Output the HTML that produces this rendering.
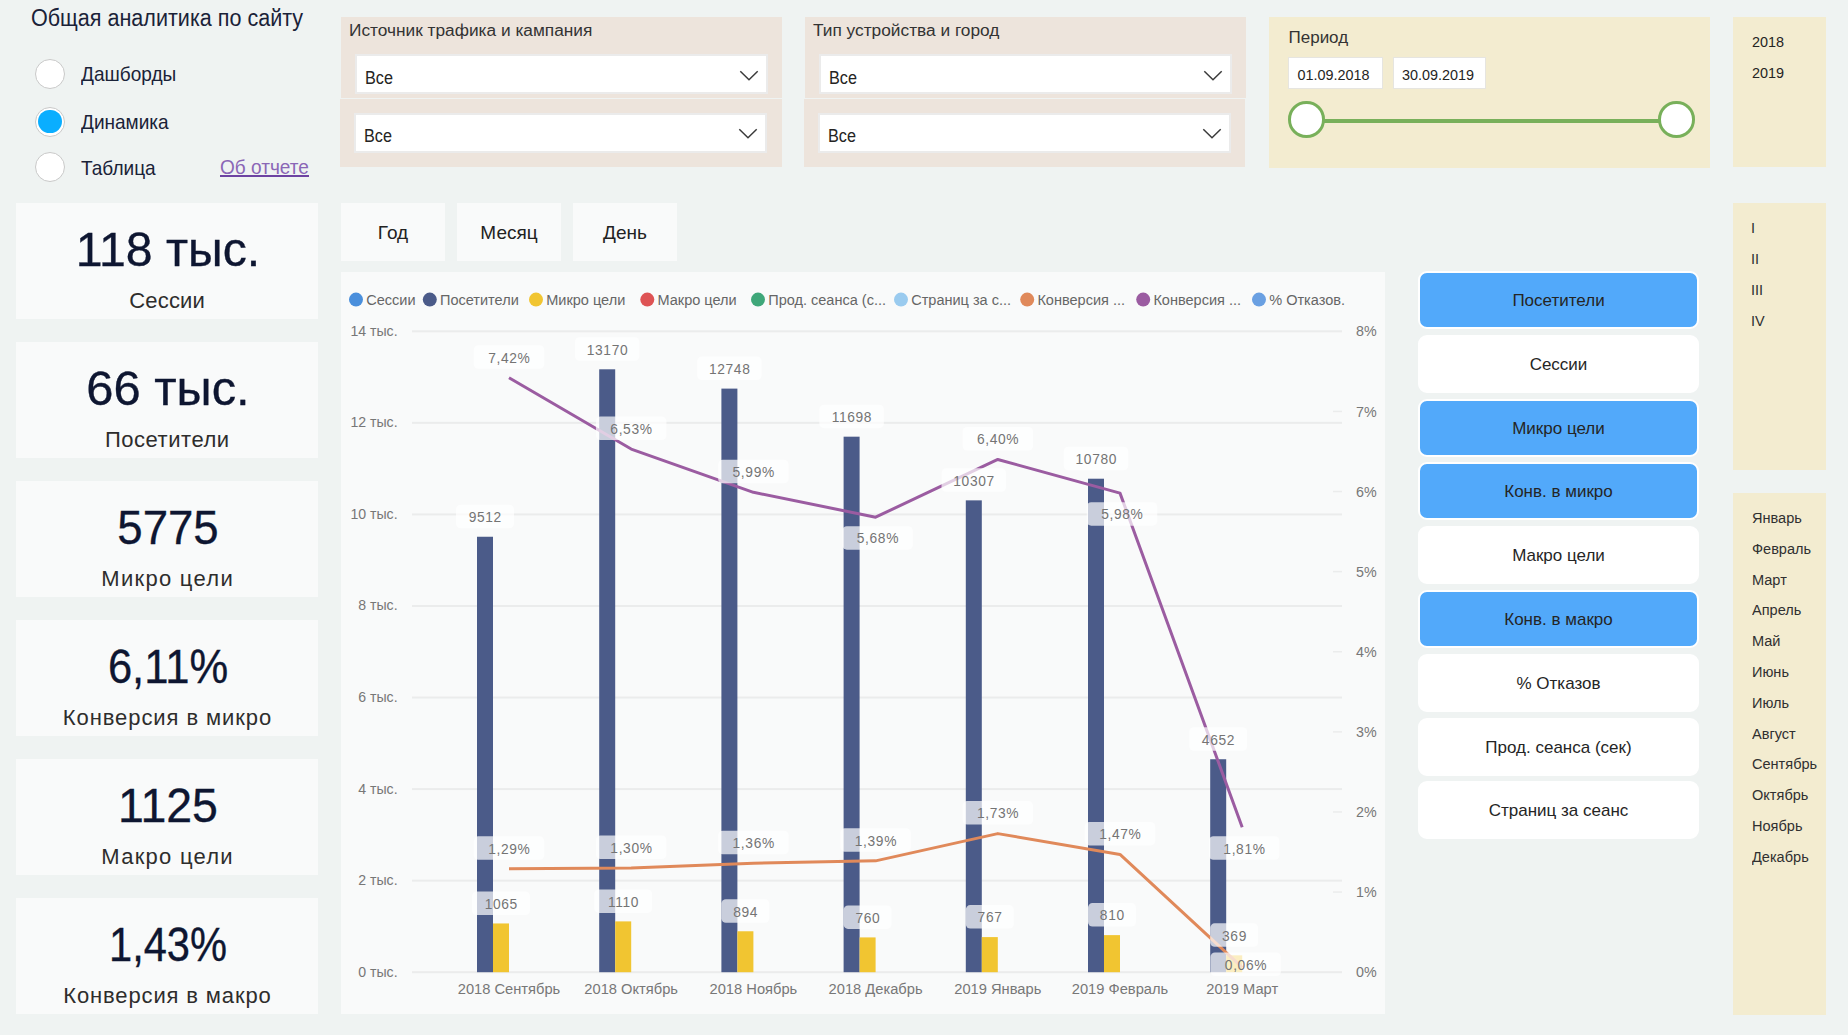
<!DOCTYPE html>
<html><head><meta charset="utf-8"><title>Общая аналитика по сайту</title>
<style>
html,body{margin:0;padding:0;}
body{width:1848px;height:1035px;overflow:hidden;position:relative;background:#eff3f2;font-family:"Liberation Sans", sans-serif;}
</style></head><body>
<div style="position:absolute;left:31.00px;top:6.73px;font-size:23px;line-height:23px;color:#1a2238;white-space:pre;transform:scaleX(0.937);transform-origin:0 50%;">Общая аналитика по сайту</div>
<div style="position:absolute;left:35px;top:59.3px;width:28px;height:28px;border-radius:50%;background:#fff;border:1px solid #c9c9c9;"></div>
<div style="position:absolute;left:81.00px;top:64.46px;font-size:20.25px;line-height:20.25px;color:#1a2238;white-space:pre;transform:scaleX(0.94);transform-origin:0 50%;">Дашборды</div>
<div style="position:absolute;left:35px;top:106.5px;width:28px;height:28px;border-radius:50%;background:#fff;border:1px solid #c9c9c9;"></div>
<div style="position:absolute;left:38.3px;top:109.8px;width:23.4px;height:23.4px;border-radius:50%;background:#0aaeff;"></div>
<div style="position:absolute;left:81.00px;top:111.66px;font-size:20.25px;line-height:20.25px;color:#1a2238;white-space:pre;transform:scaleX(0.94);transform-origin:0 50%;">Динамика</div>
<div style="position:absolute;left:35px;top:152.4px;width:28px;height:28px;border-radius:50%;background:#fff;border:1px solid #c9c9c9;"></div>
<div style="position:absolute;left:81.00px;top:157.56px;font-size:20.25px;line-height:20.25px;color:#1a2238;white-space:pre;transform:scaleX(0.94);transform-origin:0 50%;">Таблица</div>
<div style="position:absolute;left:220.30px;top:157.26px;font-size:20.25px;line-height:20.25px;color:#8a66b6;white-space:pre;transform:scaleX(0.94);transform-origin:0 50%;">Об отчете</div>
<div style="position:absolute;left:220px;top:175.4px;width:89px;height:1.7px;background:#6d43a2;"></div>
<div style="position:absolute;left:341px;top:17px;width:441px;height:81px;background:#ede4dc;"></div>
<div style="position:absolute;left:340px;top:99px;width:442px;height:68px;background:#ede4dc;"></div>
<div style="position:absolute;left:349.00px;top:21.56px;font-size:17.3px;line-height:17.3px;color:#333;white-space:pre;">Источник трафика и кампания</div>
<div style="position:absolute;left:355px;top:54.3px;width:409px;height:35.4px;background:#fff;border:2px solid #ebebeb;"></div>
<div style="position:absolute;left:365.10px;top:68.66px;font-size:18px;line-height:18px;color:#252423;white-space:pre;transform:scaleX(0.9);transform-origin:0 50%;">Все</div>
<svg style="position:absolute;left:738.5px;top:67.6px" width="20" height="14" viewBox="0 0 20 14"><path d="M1.3 3.3 L10 11.8 L18.7 3.3" fill="none" stroke="#3b3b3b" stroke-width="1.5"/></svg>
<div style="position:absolute;left:354px;top:112.9px;width:409px;height:35.7px;background:#fff;border:2px solid #ebebeb;"></div>
<div style="position:absolute;left:364.10px;top:127.26px;font-size:18px;line-height:18px;color:#252423;white-space:pre;transform:scaleX(0.9);transform-origin:0 50%;">Все</div>
<svg style="position:absolute;left:737.5px;top:126.20000000000002px" width="20" height="14" viewBox="0 0 20 14"><path d="M1.3 3.3 L10 11.8 L18.7 3.3" fill="none" stroke="#3b3b3b" stroke-width="1.5"/></svg>
<div style="position:absolute;left:805px;top:17px;width:441px;height:81px;background:#ede4dc;"></div>
<div style="position:absolute;left:804px;top:99px;width:441px;height:68px;background:#ede4dc;"></div>
<div style="position:absolute;left:813.00px;top:21.56px;font-size:17.3px;line-height:17.3px;color:#333;white-space:pre;">Тип устройства и город</div>
<div style="position:absolute;left:819px;top:54.3px;width:409px;height:35.4px;background:#fff;border:2px solid #ebebeb;"></div>
<div style="position:absolute;left:829.10px;top:68.66px;font-size:18px;line-height:18px;color:#252423;white-space:pre;transform:scaleX(0.9);transform-origin:0 50%;">Все</div>
<svg style="position:absolute;left:1202.5px;top:67.6px" width="20" height="14" viewBox="0 0 20 14"><path d="M1.3 3.3 L10 11.8 L18.7 3.3" fill="none" stroke="#3b3b3b" stroke-width="1.5"/></svg>
<div style="position:absolute;left:818px;top:112.9px;width:409px;height:35.7px;background:#fff;border:2px solid #ebebeb;"></div>
<div style="position:absolute;left:828.10px;top:127.26px;font-size:18px;line-height:18px;color:#252423;white-space:pre;transform:scaleX(0.9);transform-origin:0 50%;">Все</div>
<svg style="position:absolute;left:1201.5px;top:126.20000000000002px" width="20" height="14" viewBox="0 0 20 14"><path d="M1.3 3.3 L10 11.8 L18.7 3.3" fill="none" stroke="#3b3b3b" stroke-width="1.5"/></svg>
<div style="position:absolute;left:1269px;top:17px;width:441px;height:151px;background:#f3ecd0;"></div>
<div style="position:absolute;left:1288.50px;top:28.61px;font-size:17px;line-height:17px;color:#333;white-space:pre;">Период</div>
<div style="position:absolute;left:1288px;top:57.3px;width:93px;height:30px;background:#fff;border:1.5px solid #e6e5e0;"></div>
<div style="position:absolute;left:1297.40px;top:68.41px;font-size:14.4px;line-height:14.4px;color:#252423;white-space:pre;">01.09.2018</div>
<div style="position:absolute;left:1392.5px;top:57.3px;width:91px;height:30px;background:#fff;border:1.5px solid #e6e5e0;"></div>
<div style="position:absolute;left:1401.90px;top:68.41px;font-size:14.4px;line-height:14.4px;color:#252423;white-space:pre;">30.09.2019</div>
<div style="position:absolute;left:1306px;top:118.5px;width:370px;height:4px;background:#78b05a;"></div>
<div style="position:absolute;left:1288.0px;top:101.2px;width:30.6px;height:30.6px;border-radius:50%;background:#fff;border:3.2px solid #78b05a;"></div>
<div style="position:absolute;left:1658.0px;top:101.2px;width:30.6px;height:30.6px;border-radius:50%;background:#fff;border:3.2px solid #78b05a;"></div>
<div style="position:absolute;left:1733px;top:17px;width:93px;height:150px;background:#f3ecd0;"></div>
<div style="position:absolute;left:1751.60px;top:34.08px;font-size:15.5px;line-height:15.5px;color:#252423;white-space:pre;transform:scaleX(0.93);transform-origin:0 50%;">2018</div>
<div style="position:absolute;left:1751.60px;top:65.08px;font-size:15.5px;line-height:15.5px;color:#252423;white-space:pre;transform:scaleX(0.93);transform-origin:0 50%;">2019</div>
<div style="position:absolute;left:16px;top:203px;width:302px;height:116px;background:#f9fafa;"></div>
<div style="position:absolute;left:-332.00px;width:1000px;text-align:center;top:225.57px;font-size:48px;line-height:48px;color:#0e1631;white-space:pre;transform:scaleX(1.004);transform-origin:50% 50%;-webkit-text-stroke:0.35px #0e1631;">118 тыс.</div>
<div style="position:absolute;left:-332.90px;width:1000px;text-align:center;top:289.68px;font-size:22px;line-height:22px;color:#2e2d2c;white-space:pre;letter-spacing:0.2px;">Сессии</div>
<div style="position:absolute;left:16px;top:342px;width:302px;height:116px;background:#f9fafa;"></div>
<div style="position:absolute;left:-332.00px;width:1000px;text-align:center;top:364.57px;font-size:48px;line-height:48px;color:#0e1631;white-space:pre;transform:scaleX(1.017);transform-origin:50% 50%;-webkit-text-stroke:0.35px #0e1631;">66 тыс.</div>
<div style="position:absolute;left:-332.74px;width:1000px;text-align:center;top:428.68px;font-size:22px;line-height:22px;color:#2e2d2c;white-space:pre;letter-spacing:0.53px;">Посетители</div>
<div style="position:absolute;left:16px;top:481px;width:302px;height:116px;background:#f9fafa;"></div>
<div style="position:absolute;left:-332.00px;width:1000px;text-align:center;top:503.57px;font-size:48px;line-height:48px;color:#0e1631;white-space:pre;transform:scaleX(0.95);transform-origin:50% 50%;-webkit-text-stroke:0.35px #0e1631;">5775</div>
<div style="position:absolute;left:-332.36px;width:1000px;text-align:center;top:567.68px;font-size:22px;line-height:22px;color:#2e2d2c;white-space:pre;letter-spacing:1.29px;">Микро цели</div>
<div style="position:absolute;left:16px;top:620px;width:302px;height:116px;background:#f9fafa;"></div>
<div style="position:absolute;left:-332.00px;width:1000px;text-align:center;top:642.57px;font-size:48px;line-height:48px;color:#0e1631;white-space:pre;transform:scaleX(0.907);transform-origin:50% 50%;-webkit-text-stroke:0.35px #0e1631;">6,11%</div>
<div style="position:absolute;left:-332.54px;width:1000px;text-align:center;top:706.68px;font-size:22px;line-height:22px;color:#2e2d2c;white-space:pre;letter-spacing:0.92px;">Конверсия в микро</div>
<div style="position:absolute;left:16px;top:759px;width:302px;height:116px;background:#f9fafa;"></div>
<div style="position:absolute;left:-332.00px;width:1000px;text-align:center;top:781.57px;font-size:48px;line-height:48px;color:#0e1631;white-space:pre;transform:scaleX(0.968);transform-origin:50% 50%;-webkit-text-stroke:0.35px #0e1631;">1125</div>
<div style="position:absolute;left:-332.38px;width:1000px;text-align:center;top:845.68px;font-size:22px;line-height:22px;color:#2e2d2c;white-space:pre;letter-spacing:1.25px;">Макро цели</div>
<div style="position:absolute;left:16px;top:898px;width:302px;height:116px;background:#f9fafa;"></div>
<div style="position:absolute;left:-332.00px;width:1000px;text-align:center;top:920.57px;font-size:48px;line-height:48px;color:#0e1631;white-space:pre;transform:scaleX(0.867);transform-origin:50% 50%;-webkit-text-stroke:0.35px #0e1631;">1,43%</div>
<div style="position:absolute;left:-332.57px;width:1000px;text-align:center;top:984.68px;font-size:22px;line-height:22px;color:#2e2d2c;white-space:pre;letter-spacing:0.86px;">Конверсия в макро</div>
<div style="position:absolute;left:341px;top:203px;width:104px;height:58px;background:#f9fafa;"></div>
<div style="position:absolute;left:-107.00px;width:1000px;text-align:center;top:222.72px;font-size:19px;line-height:19px;color:#222;white-space:pre;">Год</div>
<div style="position:absolute;left:457px;top:203px;width:104px;height:58px;background:#f9fafa;"></div>
<div style="position:absolute;left:9.00px;width:1000px;text-align:center;top:222.72px;font-size:19px;line-height:19px;color:#222;white-space:pre;">Месяц</div>
<div style="position:absolute;left:573px;top:203px;width:104px;height:58px;background:#f9fafa;"></div>
<div style="position:absolute;left:125.00px;width:1000px;text-align:center;top:222.72px;font-size:19px;line-height:19px;color:#222;white-space:pre;">День</div>
<div style="position:absolute;left:341px;top:272px;width:1044px;height:742px;background:#f9fafa;"></div>
<div style="position:absolute;left:1418px;top:271.0px;width:277px;height:54px;background:#52a9fa;border:2px solid #fff;border-radius:9px;"></div>
<div style="position:absolute;left:1058.50px;width:1000px;text-align:center;top:291.91px;font-size:17px;line-height:17px;color:#252525;white-space:pre;font-family:"Liberation Sans", sans-serif;">Посетители</div>
<div style="position:absolute;left:1418px;top:334.8px;width:277px;height:54px;background:#ffffff;border:2px solid #fff;border-radius:9px;"></div>
<div style="position:absolute;left:1058.50px;width:1000px;text-align:center;top:355.71px;font-size:17px;line-height:17px;color:#252525;white-space:pre;font-family:"Liberation Sans", sans-serif;">Сессии</div>
<div style="position:absolute;left:1418px;top:398.6px;width:277px;height:54px;background:#52a9fa;border:2px solid #fff;border-radius:9px;"></div>
<div style="position:absolute;left:1058.50px;width:1000px;text-align:center;top:419.51px;font-size:17px;line-height:17px;color:#252525;white-space:pre;font-family:"Liberation Sans", sans-serif;">Микро цели</div>
<div style="position:absolute;left:1418px;top:462.4px;width:277px;height:54px;background:#52a9fa;border:2px solid #fff;border-radius:9px;"></div>
<div style="position:absolute;left:1058.50px;width:1000px;text-align:center;top:483.31px;font-size:17px;line-height:17px;color:#252525;white-space:pre;font-family:"Liberation Sans", sans-serif;">Конв. в микро</div>
<div style="position:absolute;left:1418px;top:526.2px;width:277px;height:54px;background:#ffffff;border:2px solid #fff;border-radius:9px;"></div>
<div style="position:absolute;left:1058.50px;width:1000px;text-align:center;top:547.11px;font-size:17px;line-height:17px;color:#252525;white-space:pre;font-family:"Liberation Sans", sans-serif;">Макро цели</div>
<div style="position:absolute;left:1418px;top:590.0px;width:277px;height:54px;background:#52a9fa;border:2px solid #fff;border-radius:9px;"></div>
<div style="position:absolute;left:1058.50px;width:1000px;text-align:center;top:610.91px;font-size:17px;line-height:17px;color:#252525;white-space:pre;font-family:"Liberation Sans", sans-serif;">Конв. в макро</div>
<div style="position:absolute;left:1418px;top:653.8px;width:277px;height:54px;background:#ffffff;border:2px solid #fff;border-radius:9px;"></div>
<div style="position:absolute;left:1058.50px;width:1000px;text-align:center;top:674.71px;font-size:17px;line-height:17px;color:#252525;white-space:pre;font-family:"Liberation Sans", sans-serif;">% Отказов</div>
<div style="position:absolute;left:1418px;top:717.5999999999999px;width:277px;height:54px;background:#ffffff;border:2px solid #fff;border-radius:9px;"></div>
<div style="position:absolute;left:1058.50px;width:1000px;text-align:center;top:738.51px;font-size:17px;line-height:17px;color:#252525;white-space:pre;font-family:"Liberation Sans", sans-serif;">Прод. сеанса (сек)</div>
<div style="position:absolute;left:1418px;top:781.4px;width:277px;height:54px;background:#ffffff;border:2px solid #fff;border-radius:9px;"></div>
<div style="position:absolute;left:1058.50px;width:1000px;text-align:center;top:802.31px;font-size:17px;line-height:17px;color:#252525;white-space:pre;font-family:"Liberation Sans", sans-serif;">Страниц за сеанс</div>
<div style="position:absolute;left:1733px;top:203px;width:93px;height:267px;background:#f3ecd0;"></div>
<div style="position:absolute;left:1751.00px;top:219.96px;font-size:15.4px;line-height:15.4px;color:#303030;white-space:pre;transform:scaleX(0.94);transform-origin:0 50%;">I</div>
<div style="position:absolute;left:1751.00px;top:250.96px;font-size:15.4px;line-height:15.4px;color:#303030;white-space:pre;transform:scaleX(0.94);transform-origin:0 50%;">II</div>
<div style="position:absolute;left:1751.00px;top:281.96px;font-size:15.4px;line-height:15.4px;color:#303030;white-space:pre;transform:scaleX(0.94);transform-origin:0 50%;">III</div>
<div style="position:absolute;left:1751.00px;top:312.96px;font-size:15.4px;line-height:15.4px;color:#303030;white-space:pre;transform:scaleX(0.94);transform-origin:0 50%;">IV</div>
<div style="position:absolute;left:1733px;top:493px;width:93px;height:522px;background:#f3ecd0;"></div>
<div style="position:absolute;left:1752.00px;top:509.96px;font-size:15.4px;line-height:15.4px;color:#303030;white-space:pre;transform:scaleX(0.945);transform-origin:0 50%;">Январь</div>
<div style="position:absolute;left:1752.00px;top:540.76px;font-size:15.4px;line-height:15.4px;color:#303030;white-space:pre;transform:scaleX(0.945);transform-origin:0 50%;">Февраль</div>
<div style="position:absolute;left:1752.00px;top:571.56px;font-size:15.4px;line-height:15.4px;color:#303030;white-space:pre;transform:scaleX(0.945);transform-origin:0 50%;">Март</div>
<div style="position:absolute;left:1752.00px;top:602.36px;font-size:15.4px;line-height:15.4px;color:#303030;white-space:pre;transform:scaleX(0.945);transform-origin:0 50%;">Апрель</div>
<div style="position:absolute;left:1752.00px;top:633.16px;font-size:15.4px;line-height:15.4px;color:#303030;white-space:pre;transform:scaleX(0.945);transform-origin:0 50%;">Май</div>
<div style="position:absolute;left:1752.00px;top:663.96px;font-size:15.4px;line-height:15.4px;color:#303030;white-space:pre;transform:scaleX(0.945);transform-origin:0 50%;">Июнь</div>
<div style="position:absolute;left:1752.00px;top:694.76px;font-size:15.4px;line-height:15.4px;color:#303030;white-space:pre;transform:scaleX(0.945);transform-origin:0 50%;">Июль</div>
<div style="position:absolute;left:1752.00px;top:725.56px;font-size:15.4px;line-height:15.4px;color:#303030;white-space:pre;transform:scaleX(0.945);transform-origin:0 50%;">Август</div>
<div style="position:absolute;left:1752.00px;top:756.36px;font-size:15.4px;line-height:15.4px;color:#303030;white-space:pre;transform:scaleX(0.945);transform-origin:0 50%;">Сентябрь</div>
<div style="position:absolute;left:1752.00px;top:787.16px;font-size:15.4px;line-height:15.4px;color:#303030;white-space:pre;transform:scaleX(0.945);transform-origin:0 50%;">Октябрь</div>
<div style="position:absolute;left:1752.00px;top:817.96px;font-size:15.4px;line-height:15.4px;color:#303030;white-space:pre;transform:scaleX(0.945);transform-origin:0 50%;">Ноябрь</div>
<div style="position:absolute;left:1752.00px;top:848.76px;font-size:15.4px;line-height:15.4px;color:#303030;white-space:pre;transform:scaleX(0.945);transform-origin:0 50%;">Декабрь</div>
<svg style="position:absolute;left:341px;top:272px;font-family:"Liberation Sans", sans-serif" width="1044" height="742" viewBox="341 272 1044 742"><rect x="412" y="971.20" width="930" height="2" fill="#ebecec"/><text transform="translate(397.6,976.70) scale(0.93,1)" text-anchor="end" font-size="15.2" fill="#777">0 тыс.</text><rect x="412" y="879.64" width="930" height="2" fill="#ebecec"/><text transform="translate(397.6,885.14) scale(0.93,1)" text-anchor="end" font-size="15.2" fill="#777">2 тыс.</text><rect x="412" y="788.09" width="930" height="2" fill="#ebecec"/><text transform="translate(397.6,793.59) scale(0.93,1)" text-anchor="end" font-size="15.2" fill="#777">4 тыс.</text><rect x="412" y="696.53" width="930" height="2" fill="#ebecec"/><text transform="translate(397.6,702.03) scale(0.93,1)" text-anchor="end" font-size="15.2" fill="#777">6 тыс.</text><rect x="412" y="604.97" width="930" height="2" fill="#ebecec"/><text transform="translate(397.6,610.47) scale(0.93,1)" text-anchor="end" font-size="15.2" fill="#777">8 тыс.</text><rect x="412" y="513.41" width="930" height="2" fill="#ebecec"/><text transform="translate(397.6,518.91) scale(0.93,1)" text-anchor="end" font-size="15.2" fill="#777">10 тыс.</text><rect x="412" y="421.86" width="930" height="2" fill="#ebecec"/><text transform="translate(397.6,427.36) scale(0.93,1)" text-anchor="end" font-size="15.2" fill="#777">12 тыс.</text><rect x="412" y="330.30" width="930" height="2" fill="#ebecec"/><text transform="translate(397.6,335.80) scale(0.93,1)" text-anchor="end" font-size="15.2" fill="#777">14 тыс.</text><text transform="translate(1356,977.30) scale(0.94,1)" font-size="15.2" fill="#777">0%</text><rect x="1333" y="891.34" width="9" height="1.5" fill="#ebecec"/><text transform="translate(1356,897.19) scale(0.94,1)" font-size="15.2" fill="#777">1%</text><rect x="1333" y="811.23" width="9" height="1.5" fill="#ebecec"/><text transform="translate(1356,817.08) scale(0.94,1)" font-size="15.2" fill="#777">2%</text><rect x="1333" y="731.11" width="9" height="1.5" fill="#ebecec"/><text transform="translate(1356,736.96) scale(0.94,1)" font-size="15.2" fill="#777">3%</text><rect x="1333" y="651.00" width="9" height="1.5" fill="#ebecec"/><text transform="translate(1356,656.85) scale(0.94,1)" font-size="15.2" fill="#777">4%</text><rect x="1333" y="570.89" width="9" height="1.5" fill="#ebecec"/><text transform="translate(1356,576.74) scale(0.94,1)" font-size="15.2" fill="#777">5%</text><rect x="1333" y="490.78" width="9" height="1.5" fill="#ebecec"/><text transform="translate(1356,496.63) scale(0.94,1)" font-size="15.2" fill="#777">6%</text><rect x="1333" y="410.66" width="9" height="1.5" fill="#ebecec"/><text transform="translate(1356,416.51) scale(0.94,1)" font-size="15.2" fill="#777">7%</text><text transform="translate(1356,336.40) scale(0.94,1)" font-size="15.2" fill="#777">8%</text><rect x="477.00" y="536.75" width="16" height="435.45" fill="#4b5b89"/><rect x="493.00" y="923.45" width="16" height="48.75" fill="#f1c531"/><text x="509.00" y="993.6" text-anchor="middle" font-size="14.7" fill="#777">2018 Сентябрь</text><rect x="599.20" y="369.30" width="16" height="602.90" fill="#4b5b89"/><rect x="615.20" y="921.39" width="16" height="50.81" fill="#f1c531"/><text x="631.20" y="993.6" text-anchor="middle" font-size="14.7" fill="#777">2018 Октябрь</text><rect x="721.40" y="388.61" width="16" height="583.59" fill="#4b5b89"/><rect x="737.40" y="931.27" width="16" height="40.93" fill="#f1c531"/><text x="753.40" y="993.6" text-anchor="middle" font-size="14.7" fill="#777">2018 Ноябрь</text><rect x="843.60" y="436.68" width="16" height="535.52" fill="#4b5b89"/><rect x="859.60" y="937.41" width="16" height="34.79" fill="#f1c531"/><text x="875.60" y="993.6" text-anchor="middle" font-size="14.7" fill="#777">2018 Декабрь</text><rect x="965.80" y="500.36" width="16" height="471.84" fill="#4b5b89"/><rect x="981.80" y="937.09" width="16" height="35.11" fill="#f1c531"/><text x="997.80" y="993.6" text-anchor="middle" font-size="14.7" fill="#777">2019 Январь</text><rect x="1088.00" y="478.71" width="16" height="493.49" fill="#4b5b89"/><rect x="1104.00" y="935.12" width="16" height="37.08" fill="#f1c531"/><text x="1120.00" y="993.6" text-anchor="middle" font-size="14.7" fill="#777">2019 Февраль</text><rect x="1210.20" y="759.24" width="16" height="212.96" fill="#4b5b89"/><rect x="1226.20" y="955.31" width="16" height="16.89" fill="#f1c531"/><text x="1242.20" y="993.6" text-anchor="middle" font-size="14.7" fill="#777">2019 Март</text><polyline points="509.00,868.85 631.20,868.05 753.40,863.25 875.60,860.84 997.80,833.61 1120.00,854.43 1242.20,967.39" fill="none" stroke="#e0895a" stroke-width="3" stroke-linejoin="round"/><polyline points="509.00,377.77 631.20,449.07 753.40,492.33 875.60,517.16 997.80,459.48 1120.00,493.13 1242.20,827.20" fill="none" stroke="#9b5ca1" stroke-width="3" stroke-linejoin="round"/><rect x="456.00" y="504.75" width="58.00" height="23.5" rx="4.5" fill="#fff" fill-opacity="0.7"/><text transform="translate(485.30,522.05) scale(0.92,1)" text-anchor="middle" font-size="15" letter-spacing="0.7" fill="#747474">9512</text><rect x="472.00" y="891.45" width="58.00" height="23.5" rx="4.5" fill="#fff" fill-opacity="0.7"/><text transform="translate(501.30,908.75) scale(0.92,1)" text-anchor="middle" font-size="15" letter-spacing="0.7" fill="#747474">1065</text><rect x="574.95" y="337.30" width="64.50" height="23.5" rx="4.5" fill="#fff" fill-opacity="0.7"/><text transform="translate(607.50,354.60) scale(0.92,1)" text-anchor="middle" font-size="15" letter-spacing="0.7" fill="#747474">13170</text><rect x="594.20" y="889.39" width="58.00" height="23.5" rx="4.5" fill="#fff" fill-opacity="0.7"/><text transform="translate(623.50,906.69) scale(0.92,1)" text-anchor="middle" font-size="15" letter-spacing="0.7" fill="#747474">1110</text><rect x="697.15" y="356.61" width="64.50" height="23.5" rx="4.5" fill="#fff" fill-opacity="0.7"/><text transform="translate(729.70,373.91) scale(0.92,1)" text-anchor="middle" font-size="15" letter-spacing="0.7" fill="#747474">12748</text><rect x="721.40" y="899.27" width="48.00" height="23.5" rx="4.5" fill="#fff" fill-opacity="0.7"/><text transform="translate(745.70,916.57) scale(0.92,1)" text-anchor="middle" font-size="15" letter-spacing="0.7" fill="#747474">894</text><rect x="819.35" y="404.68" width="64.50" height="23.5" rx="4.5" fill="#fff" fill-opacity="0.7"/><text transform="translate(851.90,421.98) scale(0.92,1)" text-anchor="middle" font-size="15" letter-spacing="0.7" fill="#747474">11698</text><rect x="843.60" y="905.41" width="48.00" height="23.5" rx="4.5" fill="#fff" fill-opacity="0.7"/><text transform="translate(867.90,922.71) scale(0.92,1)" text-anchor="middle" font-size="15" letter-spacing="0.7" fill="#747474">760</text><rect x="941.55" y="468.36" width="64.50" height="23.5" rx="4.5" fill="#fff" fill-opacity="0.7"/><text transform="translate(974.10,485.66) scale(0.92,1)" text-anchor="middle" font-size="15" letter-spacing="0.7" fill="#747474">10307</text><rect x="965.80" y="905.09" width="48.00" height="23.5" rx="4.5" fill="#fff" fill-opacity="0.7"/><text transform="translate(990.10,922.39) scale(0.92,1)" text-anchor="middle" font-size="15" letter-spacing="0.7" fill="#747474">767</text><rect x="1063.75" y="446.71" width="64.50" height="23.5" rx="4.5" fill="#fff" fill-opacity="0.7"/><text transform="translate(1096.30,464.01) scale(0.92,1)" text-anchor="middle" font-size="15" letter-spacing="0.7" fill="#747474">10780</text><rect x="1088.00" y="903.12" width="48.00" height="23.5" rx="4.5" fill="#fff" fill-opacity="0.7"/><text transform="translate(1112.30,920.42) scale(0.92,1)" text-anchor="middle" font-size="15" letter-spacing="0.7" fill="#747474">810</text><rect x="1189.20" y="727.24" width="58.00" height="23.5" rx="4.5" fill="#fff" fill-opacity="0.7"/><text transform="translate(1218.50,744.54) scale(0.92,1)" text-anchor="middle" font-size="15" letter-spacing="0.7" fill="#747474">4652</text><rect x="1210.20" y="923.31" width="48.00" height="23.5" rx="4.5" fill="#fff" fill-opacity="0.7"/><text transform="translate(1234.50,940.61) scale(0.92,1)" text-anchor="middle" font-size="15" letter-spacing="0.7" fill="#747474">369</text><rect x="473.75" y="345.27" width="70.50" height="23.5" rx="4.5" fill="#fff" fill-opacity="0.7"/><text transform="translate(509.30,362.57) scale(0.92,1)" text-anchor="middle" font-size="15" letter-spacing="0.7" fill="#747474">7,42%</text><rect x="595.95" y="416.57" width="70.50" height="23.5" rx="4.5" fill="#fff" fill-opacity="0.7"/><text transform="translate(631.50,433.87) scale(0.92,1)" text-anchor="middle" font-size="15" letter-spacing="0.7" fill="#747474">6,53%</text><rect x="718.15" y="459.83" width="70.50" height="23.5" rx="4.5" fill="#fff" fill-opacity="0.7"/><text transform="translate(753.70,477.13) scale(0.92,1)" text-anchor="middle" font-size="15" letter-spacing="0.7" fill="#747474">5,99%</text><rect x="842.35" y="526.16" width="70.50" height="23.5" rx="4.5" fill="#fff" fill-opacity="0.7"/><text transform="translate(877.90,543.46) scale(0.92,1)" text-anchor="middle" font-size="15" letter-spacing="0.7" fill="#747474">5,68%</text><rect x="962.55" y="426.98" width="70.50" height="23.5" rx="4.5" fill="#fff" fill-opacity="0.7"/><text transform="translate(998.10,444.28) scale(0.92,1)" text-anchor="middle" font-size="15" letter-spacing="0.7" fill="#747474">6,40%</text><rect x="1086.75" y="502.13" width="70.50" height="23.5" rx="4.5" fill="#fff" fill-opacity="0.7"/><text transform="translate(1122.30,519.43) scale(0.92,1)" text-anchor="middle" font-size="15" letter-spacing="0.7" fill="#747474">5,98%</text><rect x="1208.95" y="836.20" width="70.50" height="23.5" rx="4.5" fill="#fff" fill-opacity="0.7"/><text transform="translate(1244.50,853.50) scale(0.92,1)" text-anchor="middle" font-size="15" letter-spacing="0.7" fill="#747474">1,81%</text><rect x="473.75" y="836.35" width="70.50" height="23.5" rx="4.5" fill="#fff" fill-opacity="0.7"/><text transform="translate(509.30,853.65) scale(0.92,1)" text-anchor="middle" font-size="15" letter-spacing="0.7" fill="#747474">1,29%</text><rect x="595.95" y="835.55" width="70.50" height="23.5" rx="4.5" fill="#fff" fill-opacity="0.7"/><text transform="translate(631.50,852.85) scale(0.92,1)" text-anchor="middle" font-size="15" letter-spacing="0.7" fill="#747474">1,30%</text><rect x="718.15" y="830.75" width="70.50" height="23.5" rx="4.5" fill="#fff" fill-opacity="0.7"/><text transform="translate(753.70,848.05) scale(0.92,1)" text-anchor="middle" font-size="15" letter-spacing="0.7" fill="#747474">1,36%</text><rect x="840.35" y="828.34" width="70.50" height="23.5" rx="4.5" fill="#fff" fill-opacity="0.7"/><text transform="translate(875.90,845.64) scale(0.92,1)" text-anchor="middle" font-size="15" letter-spacing="0.7" fill="#747474">1,39%</text><rect x="962.55" y="801.11" width="70.50" height="23.5" rx="4.5" fill="#fff" fill-opacity="0.7"/><text transform="translate(998.10,818.41) scale(0.92,1)" text-anchor="middle" font-size="15" letter-spacing="0.7" fill="#747474">1,73%</text><rect x="1084.75" y="821.93" width="70.50" height="23.5" rx="4.5" fill="#fff" fill-opacity="0.7"/><text transform="translate(1120.30,839.23) scale(0.92,1)" text-anchor="middle" font-size="15" letter-spacing="0.7" fill="#747474">1,47%</text><rect x="1210.45" y="952.50" width="70.50" height="23.5" rx="4.5" fill="#fff" fill-opacity="0.7"/><text transform="translate(1246.00,969.80) scale(0.92,1)" text-anchor="middle" font-size="15" letter-spacing="0.7" fill="#747474">0,06%</text><circle cx="356" cy="299.6" r="7" fill="#4a8fdc"/><text transform="translate(366.2,305.2) scale(0.95,1)" font-size="15.3" fill="#666">Сессии</text><circle cx="429.8" cy="299.6" r="7" fill="#4b5b89"/><text transform="translate(440.0,305.2) scale(0.95,1)" font-size="15.3" fill="#666">Посетители</text><circle cx="536" cy="299.6" r="7" fill="#f1c531"/><text transform="translate(546.2,305.2) scale(0.95,1)" font-size="15.3" fill="#666">Микро цели</text><circle cx="647.3" cy="299.6" r="7" fill="#de5354"/><text transform="translate(657.5,305.2) scale(0.95,1)" font-size="15.3" fill="#666">Макро цели</text><circle cx="758" cy="299.6" r="7" fill="#3fa779"/><text transform="translate(768.2,305.2) scale(0.95,1)" font-size="15.3" fill="#666">Прод. сеанса (с...</text><circle cx="901" cy="299.6" r="7" fill="#9acbef"/><text transform="translate(911.2,305.2) scale(0.95,1)" font-size="15.3" fill="#666">Страниц за с...</text><circle cx="1027.2" cy="299.6" r="7" fill="#e0895a"/><text transform="translate(1037.4,305.2) scale(0.95,1)" font-size="15.3" fill="#666">Конверсия ...</text><circle cx="1143.2" cy="299.6" r="7" fill="#9b5ca1"/><text transform="translate(1153.4,305.2) scale(0.95,1)" font-size="15.3" fill="#666">Конверсия ...</text><circle cx="1259" cy="299.6" r="7" fill="#6aa0e2"/><text transform="translate(1269.2,305.2) scale(0.95,1)" font-size="15.3" fill="#666">% Отказов.</text></svg>
</body></html>
